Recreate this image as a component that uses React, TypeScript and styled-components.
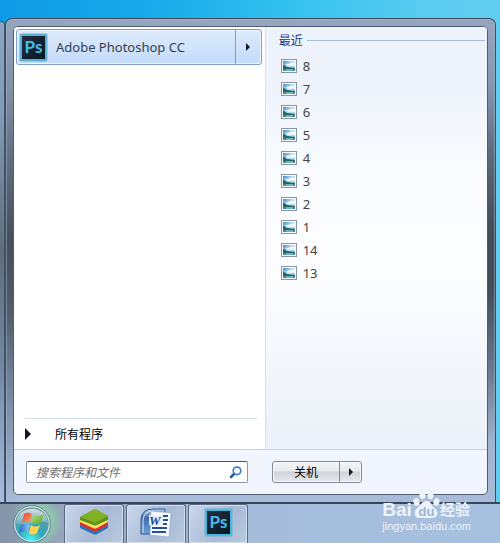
import React from "react";
import styled, { createGlobalStyle } from "styled-components";

const Global = createGlobalStyle`
  * { box-sizing: border-box; }
  body { margin: 0; font-family: "Noto Sans", "Noto Sans CJK SC", sans-serif; font-size: 12px; color: #222; }
  button, input { font: inherit; color: inherit; margin: 0; }
  svg { display: block; flex: none; }
`;

const Desktop = styled.div`
  min-height: 100vh;
  display: flex;
  flex-direction: column;
  padding-top: 18px;
  background: linear-gradient(90deg, #109be6 0%, #16a8ea 28%, #36c3ee 60%, #5accf1 85%, #62cdf0 100%);
`;

const Stage = styled.div`
  flex: 1;
  display: flex;
  padding-right: 4px;
`;

const NeighbourWindow = styled.div`
  width: 5px;
  margin-top: 3px;
  border: solid #42556c;
  border-width: 1px 1px 0 0;
  border-top-right-radius: 4px;
  background: linear-gradient(#8ba6c2, #8199b3 20%, #626c78 48%, #7488a0 72%, #a8bedd);
`;

const StartMenu = styled.main`
  flex: 1;
  display: flex;
  border: 1px solid #3c4b5e;
  border-radius: 7px 7px 0 0;
  border-bottom: 0;
  padding: 7px;
  box-shadow: inset 0 0 0 1px #a9b9ce80;
  background:
    linear-gradient(#96a5bf, #8596b2 14%, #5d6b7c 28%, #434e59 43%, #434e59 56%, #66778c 72%, #a0b3d0 88%, #a8bcda) right / 8px 100% no-repeat,
    linear-gradient(#96a5bf, #8391a5 14%, #5f6c7e 30%, #444f5a 46%, #4f5b69 60%, #75879f 77%, #a8bcda) left / 8px 100% no-repeat,
    linear-gradient(#96a5bf, #a8bcda);
`;

const Panel = styled.div`
  flex: 1;
  display: flex;
  flex-direction: column;
  border: 1px solid #4e5d71;
  border-radius: 5px;
  overflow: hidden;
  background: #f1f6fe;
`;

const Columns = styled.div`
  flex: 1;
  display: grid;
  grid-template-columns: 53fr 47fr;
  border-bottom: 1px solid #c5d3e4;
`;

const Programs = styled.section`
  display: flex;
  flex-direction: column;
  padding: 2px 3px 0 2px;
  background: #fff;
`;

const ProgramRow = styled.div`
  height: 36px;
  display: flex;
  border: 1px solid #7e9fc7;
  border-radius: 3px;
  background: linear-gradient(#deebfc, #c3dbfb);
  box-shadow: inset 0 0 0 1px #edf5ff;
`;

const ProgramButton = styled.button`
  flex: 1;
  display: flex;
  align-items: center;
  gap: 8px;
  padding: 0 2px;
  border: 0;
  background: none;
  font-size: 13px;
  color: #303e50;
  text-align: left;
`;

const ExpandButton = styled.button`
  width: 26px;
  display: grid;
  place-items: center;
  padding: 0;
  border: 0;
  border-left: 1px solid #7e9fc7;
  background: none;
`;

const AllPrograms = styled.button`
  margin: auto 5px 0 9px;
  height: 31px;
  display: flex;
  align-items: center;
  gap: 24px;
  padding: 0;
  border: 0;
  border-top: 1px solid #d0deeb;
  background: none;
  color: #000;
`;

const Recent = styled.aside`
  padding: 1px 2px 0 13px;
  border-left: 1px solid #d4e1f0;
  background: linear-gradient(#edf3fb, #eff4fc 15%, #fafcff 35%, #fcfdff 58%, #ebf1f9);
`;

const RecentTitle = styled.h2`
  display: flex;
  align-items: center;
  gap: 4px;
  margin: 0 0 2px;
  height: 24px;
  font-size: 12px;
  font-weight: 400;
  color: #1e3c82;
  &::after { content: ""; flex: 1; height: 1px; background: #a5bddb; }
`;

const RecentList = styled.ul`
  margin: 0;
  padding: 0;
  list-style: none;
`;

const RecentLink = styled.a`
  display: flex;
  align-items: center;
  gap: 6px;
  height: 23px;
  padding-left: 2px;
  font-size: 13px;
  color: #444;
  text-decoration: none;
`;

const Footer = styled.footer`
  height: 44px;
  display: flex;
  align-items: center;
  gap: 24px;
  padding: 0 12px;
`;

const SearchBox = styled.label`
  width: 222px;
  height: 22px;
  display: flex;
  align-items: center;
  padding: 0 5px 0 9px;
  border: 1px solid #8d97a6;
  border-top-color: #4f5661;
  border-radius: 2px;
  background: #fff;
`;

const SearchInput = styled.input`
  flex: 1;
  min-width: 0;
  padding: 0;
  border: 0;
  outline: 0;
  background: none;
  font-style: italic;
  &::placeholder { color: #6d6d6d; opacity: 1; }
`;

const PowerGroup = styled.div`
  height: 22px;
  display: flex;
  border: 1px solid #858b95;
  border-radius: 3px;
  background: linear-gradient(#f5f6f8, #e5e8ec 45%, #cfd3d9 50%, #e6e9ed);
  box-shadow: inset 0 0 0 1px #f8f9fb;
`;

const PowerButton = styled.button<{ $width: number }>`
  width: ${(p) => p.$width}px;
  display: grid;
  place-items: center;
  padding: 0;
  border: 0;
  background: none;
  color: #000;
  & + & { border-left: 1px solid #858b95; }
`;

const Taskbar = styled.nav`
  height: 41px;
  display: flex;
  align-items: stretch;
  gap: 2px;
  border-top: 2px solid #39465c;
  background: linear-gradient(90deg, #8494a9, #95a6be 13%, #a5bddb 50%, #a6c0df);
`;

const StartButton = styled.button`
  width: 62px;
  display: grid;
  place-items: center;
  padding: 0 0 0 2px;
  border: 0;
  background: radial-gradient(circle at 60% 45%, #8fcda8 30%, transparent 60%);
`;

const TaskButton = styled.button`
  width: 60px;
  display: grid;
  place-items: center;
  padding: 0 0 3px;
  border: 1px solid #59697f;
  border-bottom: 0;
  border-radius: 3px 3px 0 0;
  background: linear-gradient(120deg, #cbd8ec, #a7b9d4 55%, #b8c9e1);
  box-shadow: inset 0 0 0 1px #d4e1f2;
`;

const Watermark = styled.div`
  position: absolute;
  right: 29px;
  bottom: 10px;
  color: #edf3fa;
  pointer-events: none;
`;

const Brand = styled.div`
  display: flex;
  align-items: flex-end;
  font: 700 19px/18px "Liberation Sans", "Noto Sans CJK SC", sans-serif;
`;

const BrandChinese = styled.span`
  font-size: 15px;
`;

const Site = styled.div`
  font: 11px/14px "Liberation Sans", sans-serif;
`;

const Arrow = ({ size = 8 }: { size?: number }) => (
  <svg width={size / 2} height={size} viewBox="0 0 4 8" aria-hidden="true">
    <path d="M0 0 4 4 0 8Z" fill="#101820" />
  </svg>
);

const PhotoshopIcon = () => (
  <svg width="29" height="29" viewBox="0 0 29 29" aria-hidden="true">
    <defs>
      <linearGradient id="psDark" x2="1" y2="1"><stop stopColor="#252c42" /><stop offset="1" stopColor="#071923" /></linearGradient>
    </defs>
    <rect x="1" y="1" width="27" height="27" rx="1" fill="#42b8e0" stroke="#78aec7" />
    <rect x="3" y="3" width="23" height="23" fill="url(#psDark)" />
    <text x="14.5" y="20" textAnchor="middle" fontFamily="Lato, sans-serif" fontSize="17" fontWeight="700" fill="#45bee7">Ps</text>
  </svg>
);

const PictureIcon = () => (
  <svg width="16" height="14" viewBox="0 0 16 14" aria-hidden="true">
    <defs>
      <linearGradient id="sky" x2="1" y2="1"><stop stopColor="#3b83cc" /><stop offset=".45" stopColor="#c2e7f8" /><stop offset="1" stopColor="#83c2e1" /></linearGradient>
    </defs>
    <rect x=".5" y=".5" width="15" height="13" fill="#fff" stroke="#8d959c" />
    <path d="M2 2h12v10H2z" fill="url(#sky)" />
    <path d="M4 5c4 1 6-2 10-1v3c-3-1-6 1-10-2" fill="#fff" opacity=".85" />
    <path d="M2 6c2 0 3 2 5 2s4 1 7 1v1H2z" fill="#2b6757" />
    <path d="M2 10h12v2H2z" fill="#3988af" />
    <path d="M5 11h7" stroke="#a0dce5" />
  </svg>
);

const SearchIcon = () => (
  <svg width="13" height="13" viewBox="0 0 13 13" fill="none" aria-hidden="true">
    <path d="m2 11 4-4" stroke="#315b9b" strokeWidth="2.6" strokeLinecap="round" />
    <circle cx="8" cy="4.8" r="3.8" fill="#eff9ff" stroke="#3a7abd" strokeWidth="1.6" />
  </svg>
);

const WindowsOrb = () => (
  <svg width="38" height="38" viewBox="0 0 38 38" aria-hidden="true">
    <defs>
      <radialGradient id="orb" cx=".45" cy=".95" r=".9"><stop stopColor="#4ff0ea" /><stop offset=".4" stopColor="#2fa9bd" /><stop offset="1" stopColor="#70929b" /></radialGradient>
      <linearGradient id="shine" x2="0" y2="1"><stop stopColor="#fff" stopOpacity=".7" /><stop offset="1" stopColor="#fff" stopOpacity=".15" /></linearGradient>
      <linearGradient id="flagRed" x2="1" y2="1"><stop stopColor="#e5431f" /><stop offset="1" stopColor="#ffa477" /></linearGradient>
      <linearGradient id="flagGreen" x2="1" y2="1"><stop stopColor="#b9e184" /><stop offset="1" stopColor="#54a52e" /></linearGradient>
      <linearGradient id="flagBlue" x2="1" y2="0"><stop stopColor="#2269c2" /><stop offset="1" stopColor="#8ecff2" /></linearGradient>
    </defs>
    <circle cx="19" cy="19" r="17.5" fill="url(#orb)" stroke="#d2e9ed" strokeWidth="1.4" />
    <circle cx="19" cy="19" r="18.4" fill="none" stroke="#466476" strokeWidth=".7" />
    <path d="M3 18C4-1 34-1 35 18 25 13 16 24 3 18Z" fill="url(#shine)" />
    <path d="M11 9c3-2 6-1 8 0l-2 9c-3-2-6-1-8 0z" fill="url(#flagRed)" />
    <path d="M20 10c4 2 7 1 11-1l-3 9c-3 2-7 1-10 0z" fill="url(#flagGreen)" />
    <path d="M8 20c3-2 6-1 9 0l-2 8c-3-2-6-2-9 0z" fill="url(#flagBlue)" />
    <path d="M18 20c4 2 6 2 9 0l-3 8c-3 2-6 2-8 0z" fill="#ffd34b" />
  </svg>
);

const StackIcon = () => (
  <svg width="30" height="27" viewBox="0 0 30 27" aria-hidden="true">
    <path d="m1 16 15-7 13 6v4l-11 6q-2 1-4 0L1 19z" fill="#2872b8" />
    <path d="m1 13 15-7 13 6v4l-11 6q-2 1-4 0L1 16z" fill="#d9302e" />
    <path d="m1 10 15-7 13 6v4l-11 6q-2 1-4 0L1 13z" fill="#ffe067" />
    <path d="m1 8 13-7q2-1 4 0l11 6v4l-11 5q-2 1-4 0L1 11z" fill="#5e9218" />
    <path d="m1 8 13-7q2-1 4 0l11 6-11 6q-2 1-4 0z" fill="#80b023" />
  </svg>
);

const WordIcon = () => (
  <svg width="32" height="30" viewBox="0 0 32 30" aria-hidden="true">
    <defs>
      <linearGradient id="wordBlue" x2="0" y2="1"><stop stopColor="#b5cde9" /><stop offset=".35" stopColor="#3f6db0" /><stop offset="1" stopColor="#6ca2d8" /></linearGradient>
    </defs>
    <path d="M1 26V11Q2 1 13 1h12v25z" fill="url(#wordBlue)" stroke="#315b9c" />
    <path d="M3 25V12q1-9 10-9" fill="none" stroke="#dceafa" />
    <path d="m11 3 20 2-2 24-19-2z" fill="#f6faff" stroke="#8ba5c8" strokeWidth=".6" />
    <path d="M23 8h5m-5 4h5m-5 4h4m-15 4h15m-15 4h14" stroke="#294e91" strokeWidth="2" />
    <path d="m9 7 14 1-2 10-12-1z" fill="#e3edf8" />
    <text x="9" y="17" fontFamily="Liberation Serif, serif" fontSize="13" fontStyle="italic" fontWeight="700" fill="#234b91">W</text>
  </svg>
);

const Paw = () => (
  <svg width="28" height="29" viewBox="0 0 27 29" aria-hidden="true">
    <g fill="#edf3fa">
      <ellipse cx="4" cy="12" rx="3" ry="4" transform="rotate(-15 4 12)" />
      <ellipse cx="10" cy="5" rx="3" ry="4.3" />
      <ellipse cx="18" cy="5" rx="3" ry="4.3" />
      <ellipse cx="24" cy="12" rx="3" ry="4" transform="rotate(15 24 12)" />
      <path d="M14 11q4 0 6 5l4 4q3 8-5 8H8q-8 0-5-8l5-5q2-4 6-4" />
    </g>
    <text x="14" y="26" textAnchor="middle" fontFamily="Liberation Sans, sans-serif" fontSize="13" fontWeight="700" fill="#9bb5d3">du</text>
  </svg>
);

const recent = ["8", "7", "6", "5", "4", "3", "2", "1", "14", "13"];

export default function App() {
  return (
    <>
      <Global />
      <Desktop>
        <Stage>
          <NeighbourWindow />
          <StartMenu>
            <Panel>
              <Columns>
                <Programs>
                  <ProgramRow>
                    <ProgramButton><PhotoshopIcon />Adobe Photoshop CC</ProgramButton>
                    <ExpandButton aria-label="Adobe Photoshop CC"><Arrow /></ExpandButton>
                  </ProgramRow>
                  <AllPrograms><Arrow size={12} />所有程序</AllPrograms>
                </Programs>
                <Recent>
                  <RecentTitle>最近</RecentTitle>
                  <RecentList>
                    {recent.map((name) => (
                      <li key={name}><RecentLink href="#"><PictureIcon />{name}</RecentLink></li>
                    ))}
                  </RecentList>
                </Recent>
              </Columns>
              <Footer>
                <SearchBox>
                  <SearchInput type="text" aria-label="搜索程序和文件" placeholder="搜索程序和文件" />
                  <SearchIcon />
                </SearchBox>
                <PowerGroup>
                  <PowerButton $width={66}>关机</PowerButton>
                  <PowerButton $width={22} aria-label="关机"><Arrow /></PowerButton>
                </PowerGroup>
              </Footer>
            </Panel>
          </StartMenu>
        </Stage>
        <Taskbar>
          <StartButton aria-label="Windows"><WindowsOrb /></StartButton>
          <TaskButton aria-label="BlueStacks"><StackIcon /></TaskButton>
          <TaskButton aria-label="Word"><WordIcon /></TaskButton>
          <TaskButton aria-label="Photoshop"><PhotoshopIcon /></TaskButton>
        </Taskbar>
        <Watermark>
          <Brand>Bai<Paw /><BrandChinese>经验</BrandChinese></Brand>
          <Site>jingyan.baidu.com</Site>
        </Watermark>
      </Desktop>
    </>
  );
}
